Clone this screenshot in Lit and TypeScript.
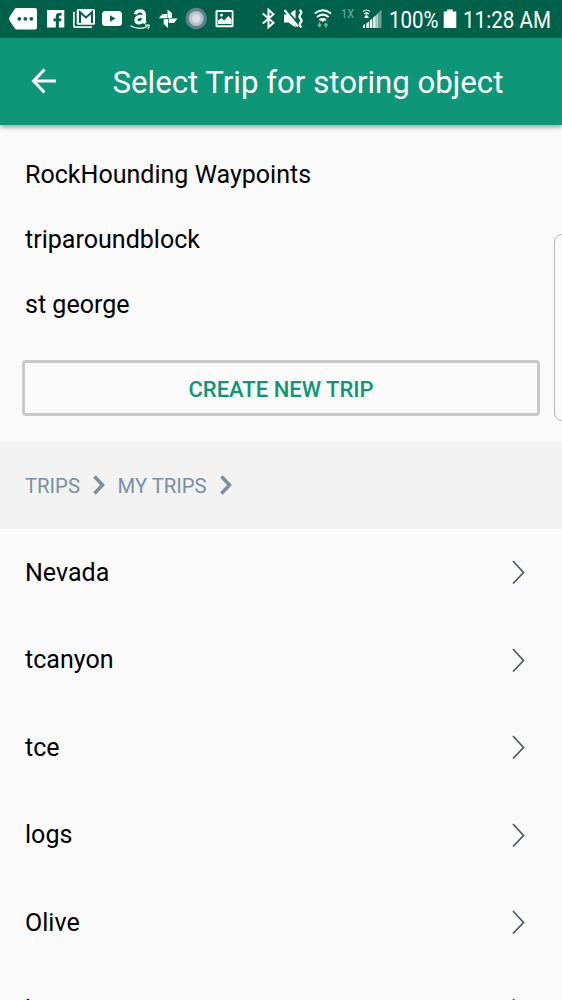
import { LitElement, html, css, svg } from "lit";
import { customElement } from "lit/decorators.js";

// Status glyphs share one drawing space; each cell shows its own slice of it.
const cell = (x: number, w: number, body: unknown) => html`
  <svg class="cell" width=${w} height="37" viewBox="${x} 0 ${w} 37" fill="#fff">${body}</svg>`;

const statusIcons = [
  cell(0, 42, svg`<path d="M17 8H35Q37 8 37 10V27.500Q37 29.500 35 29.500H17Q15.500 29.500 14.500 28L9.500 20.500Q8.300 18.800 9.500 17L14.500 9.300Q15.500 8 17 8Z"/>
    <g fill="#00614a"><circle cx="19.300" cy="18.800" r="1.900"/><circle cx="25.300" cy="18.800" r="1.900"/><circle cx="31.300" cy="18.800" r="1.900"/></g>`),
  cell(42, 26, svg`<path d="M47 10H64.300V27.500H58.900V21.300H61.100L61.500 18.500H58.900V17Q58.900 15.500 60.100 15.500H61.600V12.900H59.400Q55.800 12.900 55.800 16.300V18.500H53.500V21.300H55.800V27.500H47Z"/>`),
  cell(68, 30, svg`<path d="M73 12H74.700V26.200H92V28H75Q73 28 73 26Z"/><rect x="76.700" y="9" width="18.300" height="15.800" rx="1.500"/>
    <path d="M80 23V12.300L86 17.500L92 12.300V23" fill="none" stroke="#00614a" stroke-width="2"/>`),
  cell(98, 28, svg`<rect x="102" y="11" width="20" height="15" rx="3.500"/><path d="M110 15.200L115.500 18.500L110 21.800Z" fill="#00614a"/>`),
  cell(126, 30, svg`<path d="M135.500 14.200Q136 10.800 140.200 10.800Q144.300 10.800 144.300 15V20.500Q144.300 22 145.500 23.200M143.500 16.200Q136 16 136 20Q136 22.800 138.900 22.800Q143 22.800 143.800 18" fill="none" stroke="#fff" stroke-width="3.300"/>
    <path d="M130.500 25.700Q139 30.500 147.500 26.500M145 25.200H149.200Q149.500 27 147.800 28.800" fill="none" stroke="#fff" stroke-width="1.200"/>`),
  cell(156, 27, svg`<path d="M167.500 9.500L172 13V18H167.500ZM168.700 18.500H177.500L174 23H168.700ZM168 19.200V28L163.700 24V19.200ZM167 18.200H158.800L162.500 14H167Z"/>`),
  cell(183, 27, svg`<circle cx="196.200" cy="18.500" r="10.700" fill="#627f8c"/><circle cx="196.200" cy="18.500" r="7.400" fill="#b5c3c8"/><circle cx="196.200" cy="18.500" r="4.300" fill="#d6dfe3"/>`),
  cell(210, 45, svg`<path fill-rule="evenodd" d="M217 10H232Q233.500 10 233.500 11.500V25.800Q233.500 27.300 232 27.300H217Q215.500 27.300 215.500 25.800V11.500Q215.500 10 217 10ZM217.500 12V25.300H231.700V12Z"/>
    <path d="M218 24V20.500L221.500 18L224 20.500L228.500 16L231.500 19.500V24Z"/><circle cx="221.500" cy="15" r="1.500"/>`),
  cell(255, 24, svg`<path d="M262.800 13.500L273.500 22.800L268.500 27.300V9.800L273.500 14.300L262.800 23.500" fill="none" stroke="#fff" stroke-width="2"/>`),
  cell(279, 28, svg`<path d="M284 14.500H288.500L295.500 9.500V27.500L288.500 22.500H284Z"/><path d="M285.500 9L300 26" stroke="#00614a" stroke-width="2"/><path d="M284.500 10L298 26.500" stroke="#fff" stroke-width="2"/>
    <path d="M299.500 10Q302.500 12 300.500 14.300T300.500 18.500T300.500 22.700T301.500 27.300" fill="none" stroke="#fff" stroke-width="2.300"/>`),
  cell(307, 30, svg`<path d="M314.700 13.500Q322.700 7 331 13.500M317 17Q322.700 12.300 328.600 17M319.500 20.300Q322.700 17.800 326 20.300" fill="none" stroke="#fff" stroke-width="2"/>
    <path d="M320.500 19.500H325L322.700 22.300Z"/><path d="M317 24.500H318.700V22.300H320.300V24.500H322L319.500 27.800ZM323.500 25.600L326 22.300L328.500 25.600H326.800V27.800H325.200V25.600Z" fill="#7fb0a4"/>`),
  cell(337, 22, svg`<text class="net" x="341" y="17.500" textLength="13" lengthAdjust="spacingAndGlyphs">1X</text>`),
  cell(359, 30, svg`<path d="M363 25.500L365 24V28H363ZM366.300 23.500L368.900 21.500V28H366.300ZM369.800 20.500L372.400 18.500V28H369.800ZM373.200 17.500L375.700 15.500V28H373.200Z"/>
    <path d="M376.200 15L378.300 13V28H376.200Z" opacity=".75"/><path d="M378.500 12.500L381.500 9.500V28H378.500Z" opacity=".4"/>
    <path d="M363 11.500Q366.500 8.500 370 11.500M364.300 14Q366.500 12 368.800 14" stroke="#fff" fill="none" stroke-width="1.200"/><path d="M366.500 14L369 18H364Z"/>`),
];

const battery = html`<svg class="cell" width="24" height="37" viewBox="439 0 24 37" fill="#fff"><path d="M447.200 9.500H452.800V11.500H456.300V28H443.700V11.500H447.200Z"/></svg>`;

const statusText = (w: number, len: number, label: string) => html`
  <svg class="cell" width=${w} height="37" viewBox="0 0 ${w} 37"><text class="clock" x="0" y="27.500" textLength=${len} lengthAdjust="spacingAndGlyphs">${label}</text></svg>`;

const crumbArrow = html`<svg class="crumb-arrow" width="12" height="20" viewBox="0 0 12 20"><path d="M1.500 1.500L9.500 10L1.500 18.500" /></svg>`;

@customElement("app-root")
export class AppRoot extends LitElement {
  static styles = css`
    :host { display: block; height: 1000px; overflow: hidden; position: relative; background: #fafafa; color: #000; font-family: Roboto, sans-serif; }
    .status { height: 37.500px; background: #00614a; display: flex; }
    .cell { display: block; flex: none; overflow: visible; }
    .clock { font-size: 23px; fill: #fff; }
    .net { font-size: 12px; font-weight: 500; fill: #6ba294; }
    .bar { position: relative; height: 87.500px; background: #0d9677; display: flex; align-items: center; box-shadow: 0 2px 5px rgba(0,0,0,.38); color: #fff; }
    .back { margin: 0 55.500px 0 31px; flex: none; fill: none; stroke: #fff; stroke-width: 3; }
    .title { margin: 3px 0 0; font-size: 31.200px; font-weight: 400; white-space: nowrap; }
    .recent { padding-top: 17px; }
    .recent-item { height: 65px; padding-left: 25px; display: flex; align-items: center; font-size: 25.050px; }
    .create { display: block; box-sizing: border-box; width: 518px; height: 56px; margin: 23px 22px 0; padding: 2px 0 0; border: 3px solid #c8c8c8; border-radius: 4px; background: transparent; color: #0d9677; font: 500 22px Roboto, sans-serif; }
    .crumbs { height: 87px; margin-top: 25.500px; background: #f2f2f2; color: #7890a2; display: flex; align-items: center; padding-left: 25px; font-size: 20.300px; }
    .crumbs span { padding-top: 2px; }
    .crumb-arrow { margin: 0 12.500px 0 13px; fill: none; stroke: #7890a2; stroke-width: 3.500; }
    .row { height: 87.500px; display: flex; align-items: center; justify-content: space-between; padding: 0 37px 0 25px; font-size: 25.050px; }
    .go { fill: none; stroke: #4d5864; stroke-width: 1.700; }
    .handle { position: absolute; left: 554px; top: 234px; width: 20px; height: 187px; box-sizing: border-box; border: 1px solid #b9b9b9; border-radius: 8px; }
  `;

  render() {
    return html`
      <div class="status">${statusIcons}${statusText(50, 49.5, "100%")}${battery}${statusText(99, 88, "11:28 AM")}</div>
      <header class="bar">
        <svg class="back" width="26" height="26" viewBox="0 0 26 26"><path d="M25 13H2.500M13.500 1.500L2.500 13L13.500 24.500" /></svg>
        <h1 class="title">Select Trip for storing object</h1>
      </header>
      <div class="recent">
        ${["RockHounding Waypoints", "triparoundblock", "st george"].map((t) => html`<div class="recent-item"><span>${t}</span></div>`)}
      </div>
      <button class="create">CREATE NEW TRIP</button>
      <nav class="crumbs"><span>TRIPS</span>${crumbArrow}<span>MY TRIPS</span>${crumbArrow}</nav>
      <div class="list">
        ${["Nevada", "tcanyon", "tce", "logs", "Olive", "h"].map((t) => html`
          <div class="row"><span>${t}</span><svg class="go" width="13" height="24" viewBox="0 0 13 24"><path d="M1 1L11.500 12.500L1 23.500" /></svg></div>`)}
      </div>
      <div class="handle"></div>`;
  }
}
